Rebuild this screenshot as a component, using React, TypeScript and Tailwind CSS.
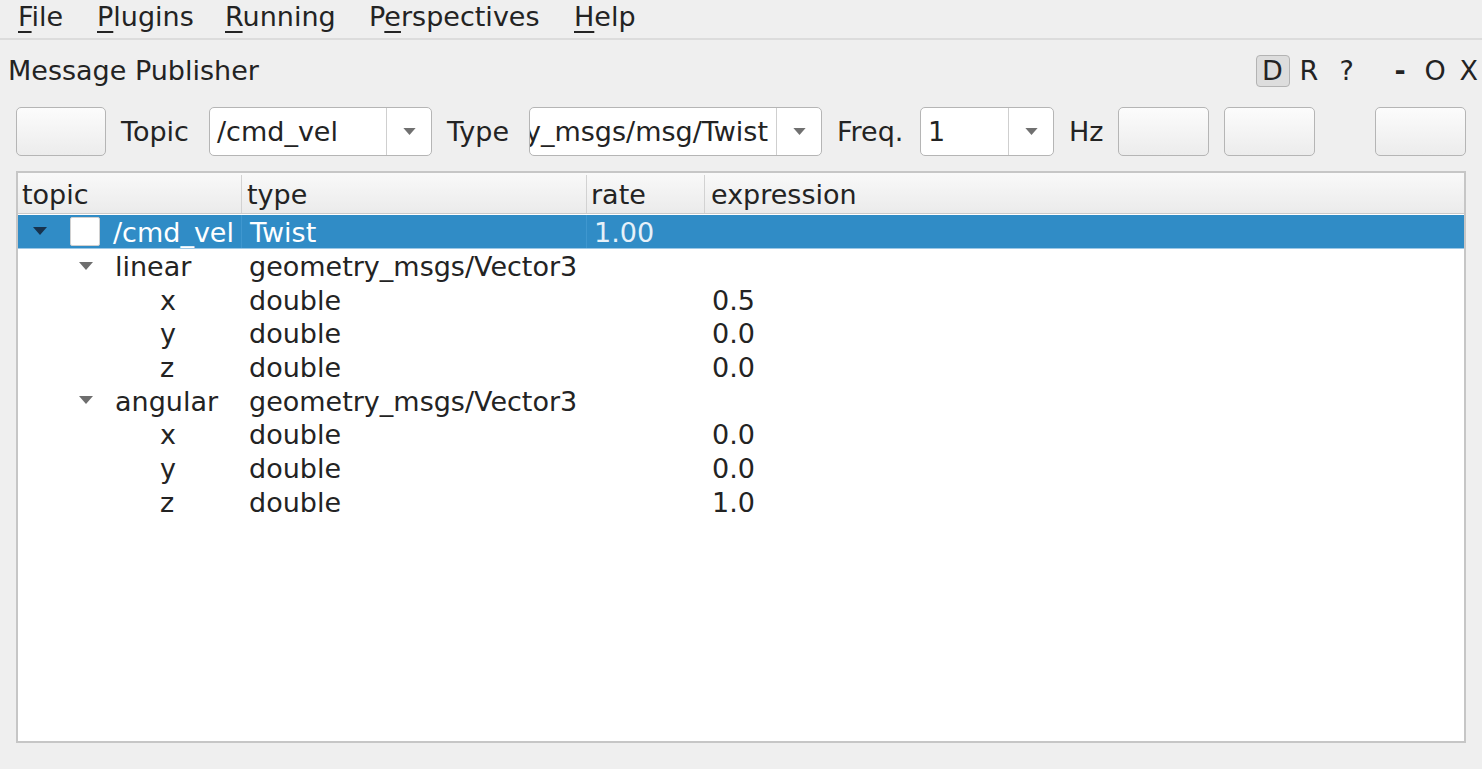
import React from "react";

const font = { fontFamily: '"DejaVu Sans", "Liberation Sans", sans-serif' };

function Tri({ color, w = 14, h = 8 }: { color: string; w?: number; h?: number }) {
  return (
    <svg width={w} height={h} viewBox="0 0 14 8">
      <polygon points="0,0 14,0 7,8" fill={color} />
    </svg>
  );
}

function Btn({ w = "w-[91px]", className = "" }: { w?: string; className?: string }) {
  return (
    <div
      className={`h-[49px] shrink-0 rounded-[5px] border border-[#b5b5b5] bg-gradient-to-b from-[#fcfcfc] to-[#ececec] ${w} ${className}`}
    />
  );
}

function Combo({ w, text, clip }: { w: string; text: string; clip?: boolean }) {
  return (
    <div className={`flex h-[49px] shrink-0 rounded-[5px] border border-[#b5b5b5] bg-white ${w}`}>
      <div
        className={`flex min-w-0 flex-1 items-center overflow-hidden whitespace-nowrap ${
          clip ? "justify-end pr-[8px]" : "pl-[7px]"
        }`}
      >
        {text}
      </div>
      <div className="flex w-[45px] shrink-0 items-center justify-center border-l border-[#cfcfcf]">
        <Tri color="#707070" w={13} h={7} />
      </div>
    </div>
  );
}

function Label({ w, text }: { w: string; text: string }) {
  return <div className={`shrink-0 pl-[15px] ${w}`}>{text}</div>;
}

interface Row {
  level: number;
  name: string;
  type: string;
  rate?: string;
  expr?: string;
  selected?: boolean;
}

const rows: Row[] = [
  { level: 0, name: "/cmd_vel", type: "Twist", rate: "1.00", selected: true },
  { level: 1, name: "linear", type: "geometry_msgs/Vector3" },
  { level: 2, name: "x", type: "double", expr: "0.5" },
  { level: 2, name: "y", type: "double", expr: "0.0" },
  { level: 2, name: "z", type: "double", expr: "0.0" },
  { level: 1, name: "angular", type: "geometry_msgs/Vector3" },
  { level: 2, name: "x", type: "double", expr: "0.0" },
  { level: 2, name: "y", type: "double", expr: "0.0" },
  { level: 2, name: "z", type: "double", expr: "1.0" },
];

function TreeRow({ r }: { r: Row }) {
  const sel = r.selected;
  return (
    <div
      className={`flex h-[33.7px] items-center whitespace-nowrap ${
        sel ? "bg-[#308cc6] text-white border-b border-[#9cc8e6]" : ""
      }`}
    >
      <div className="flex h-full w-[223px] shrink-0 items-center overflow-hidden">
        {r.level === 0 && (
          <>
            <div className="ml-[15px] flex w-[14px] justify-center">
              <Tri color="#17324d" />
            </div>
            <div className="ml-[23px] h-[29px] w-[30px] shrink-0 rounded-[2px] border border-[#d0d0d0] bg-white" />
            <span className="ml-[13px] pt-[3px]">{r.name}</span>
          </>
        )}
        {r.level === 1 && (
          <>
            <div className="ml-[61px] flex w-[14px] justify-center">
              <Tri color="#6e6e6e" />
            </div>
            <span className="ml-[22px] pt-[2px]">{r.name}</span>
          </>
        )}
        {r.level === 2 && <span className="ml-[142px] pt-[2px]">{r.name}</span>}
      </div>
      <div
        className={`flex h-full w-[345px] shrink-0 items-center pl-[8px] pt-[2px] ${
          sel ? "border-l border-[#3f97cf]" : ""
        }`}
      >
        {r.type}
      </div>
      <div
        className={`flex h-full w-[118px] shrink-0 items-center pl-[7px] pt-[2px] ${
          sel ? "border-l border-[#3f97cf] text-[#e6f1f9]" : ""
        }`}
      >
        {r.rate}
      </div>
      <div className="flex h-full flex-1 items-center pl-[8px] pt-[2px]">{r.expr}</div>
    </div>
  );
}

function Menu({ label, u, w }: { label: string; u: number; w: string }) {
  return (
    <div className={`shrink-0 ${w}`}>
      {label.split("").map((c, i) =>
        i === u ? (
          <span key={i} className="underline decoration-[2px] underline-offset-[5px]">
            {c}
          </span>
        ) : (
          <span key={i}>{c}</span>
        )
      )}
    </div>
  );
}

export default function App() {
  return (
    <div
      className="h-[769px] w-[1482px] overflow-hidden bg-[#efefef] text-[27px] leading-none text-[#232323]"
      style={font}
    >
      {/* menu bar */}
      <div className="flex h-[40px] items-center border-b-2 border-[#dcdcdc] pl-[18px] pb-[5px]">
        <Menu label="File" u={0} w="w-[79px]" />
        <Menu label="Plugins" u={0} w="w-[128px]" />
        <Menu label="Running" u={0} w="w-[144px]" />
        <Menu label="Perspectives" u={1} w="w-[205px]" />
        <Menu label="Help" u={0} w="w-[80px]" />
      </div>

      {/* title row */}
      <div className="flex h-[61px] items-center pl-[8px]">
        <div className="flex-1">Message Publisher</div>
        <div className="flex items-center pr-[4px]">
          <div className="flex h-[32px] w-[34px] items-center justify-center rounded-[4px] border border-[#b3b3b3] bg-[#dddddd]">
            D
          </div>
          <span className="ml-[10px] w-[40px]">R</span>
          <span className="w-[55px]">?</span>
          <span className="w-[30px] font-bold">-</span>
          <span className="w-[35px]">O</span>
          <span>X</span>
        </div>
      </div>

      {/* toolbar */}
      <div className="mt-[6px] flex items-center pl-[16px]">
        <Btn w="w-[90px]" />
        <Label w="w-[103px]" text="Topic" />
        <Combo w="w-[223px]" text="/cmd_vel" />
        <Label w="w-[97px]" text="Type" />
        <Combo w="w-[293px]" text="geometry_msgs/msg/Twist" clip />
        <Label w="w-[98px]" text="Freq." />
        <Combo w="w-[134px]" text="1" />
        <Label w="w-[64px]" text="Hz" />
        <Btn />
        <Btn className="ml-[15px]" />
        <Btn className="ml-[60px]" />
      </div>

      {/* tree */}
      <div className="ml-[16px] mt-[15px] h-[572px] w-[1450px] border-2 border-[#c6c6c6] bg-white">
        <div className="flex h-[41px] border-b border-[#cacaca] bg-gradient-to-b from-[#f9f9f9] to-[#ebebeb] pt-[2px]">
          <div className="flex w-[223px] items-center pl-[4px]">topic</div>
          <div className="flex w-[345px] items-center border-l border-[#d2d2d2] pl-[5px]">type</div>
          <div className="flex w-[118px] items-center border-l border-[#d2d2d2] pl-[4px]">rate</div>
          <div className="flex flex-1 items-center border-l border-[#d2d2d2] pl-[6px]">expression</div>
        </div>
        <div className="pt-[1px]">
          {rows.map((r, i) => (
            <TreeRow key={i} r={r} />
          ))}
        </div>
      </div>
    </div>
  );
}
